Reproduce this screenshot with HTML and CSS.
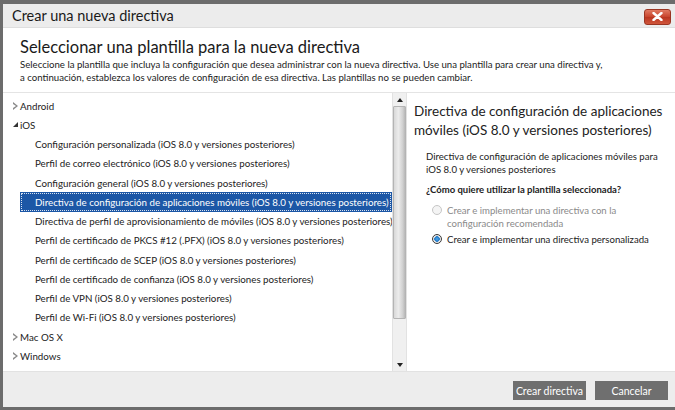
FILE: index.html
```html
<!DOCTYPE html>
<html lang="es">
<head>
<meta charset="utf-8">
<title>Crear una nueva directiva</title>
<link rel="stylesheet" href="styles.css">
</head>
<body>
<div class="dialog">
  <div class="titlebar">
    <span class="title">Crear una nueva directiva</span>
    <button class="close" aria-label="Cerrar">
      <svg width="11" height="9" viewBox="0 0 11 9"><path d="M1.5 1 L9.5 8 M9.5 1 L1.5 8" stroke="#fff" stroke-width="2.4" stroke-linecap="round"/></svg>
    </button>
  </div>
  <div class="header">
    <h1 class="heading">Seleccionar una plantilla para la nueva directiva</h1>
    <p class="desc">Seleccione la plantilla que incluya la configuración que desea administrar con la nueva directiva. Use una plantilla para crear una directiva y, a continuación, establezca los valores de configuración de esa directiva. Las plantillas no se pueden cambiar.</p>
  </div>
  <div class="main">
    <div class="tree">
      <div class="row group"><span class="arrow collapsed"></span>Android</div>
      <div class="row group"><span class="arrow expanded"></span>iOS</div>
      <div class="row child">Configuración personalizada (iOS 8.0 y versiones posteriores)</div>
      <div class="row child">Perfil de correo electrónico (iOS 8.0 y versiones posteriores)</div>
      <div class="row child">Configuración general (iOS 8.0 y versiones posteriores)</div>
      <div class="row child selected"><span class="focus">Directiva de configuración de aplicaciones móviles (iOS 8.0 y versiones posteriores)</span></div>
      <div class="row child">Directiva de perfil de aprovisionamiento de móviles (iOS 8.0 y versiones posteriores)</div>
      <div class="row child">Perfil de certificado de PKCS #12 (.PFX) (iOS 8.0 y versiones posteriores)</div>
      <div class="row child">Perfil de certificado de SCEP (iOS 8.0 y versiones posteriores)</div>
      <div class="row child">Perfil de certificado de confianza (iOS 8.0 y versiones posteriores)</div>
      <div class="row child">Perfil de VPN (iOS 8.0 y versiones posteriores)</div>
      <div class="row child">Perfil de Wi-Fi (iOS 8.0 y versiones posteriores)</div>
      <div class="row group"><span class="arrow collapsed"></span>Mac OS X</div>
      <div class="row group"><span class="arrow collapsed"></span>Windows</div>
    </div>
    <div class="scrollbar">
      <div class="sb-btn"><span class="sb-up"></span></div>
      <div class="sb-thumb"></div>
      <div class="sb-track"></div>
      <div class="sb-btn"><span class="sb-down"></span></div>
    </div>
    <div class="detail">
      <h2 class="detail-title">Directiva de configuración de aplicaciones móviles (iOS 8.0 y versiones posteriores)</h2>
      <div class="detail-body">
        <p class="detail-desc">Directiva de configuración de aplicaciones móviles para iOS 8.0 y versiones posteriores</p>
        <p class="question">¿Cómo quiere utilizar la plantilla seleccionada?</p>
        <div class="option disabled"><span class="radio"></span><span class="opt-text">Crear e implementar una directiva con la configuración recomendada</span></div>
        <div class="option"><span class="radio checked"></span><span class="opt-text">Crear e implementar una directiva personalizada</span></div>
      </div>
    </div>
  </div>
  <div class="footer">
    <button class="btn">Crear directiva</button>
    <button class="btn">Cancelar</button>
  </div>
</div>
</body>
</html>
```

FILE: styles.css
```css
* { box-sizing: border-box; }
html, body { margin: 0; padding: 0; }
body {
  background: #6c6c6c;
  width: 675px;
  height: 410px;
  overflow: hidden;
  font-family: Lato, "Open Sans", sans-serif;
  color: #222;
}
.dialog {
  margin: 4px 0 0 3px;
  height: 403px;
  background: #fff;
  display: flex;
  flex-direction: column;
}
.titlebar {
  height: 24px;
  background: #ececec;
  border-bottom: 1px solid #dedede;
  display: flex;
  align-items: center;
  justify-content: space-between;
  padding: 0 4px 0 9px;
  flex: none;
}
.title { font-size: 14.5px; color: #1a1a1a; }
.close {
  width: 27px;
  height: 16px;
  margin-top: 2px;
  border: 1px solid #9a3522;
  border-radius: 3px;
  background: linear-gradient(#e07a62, #c8432b 50%, #b93620 51%, #d0553b);
  display: flex;
  align-items: center;
  justify-content: center;
  padding: 0;
}
.header {
  height: 65px;
  border-bottom: 1px solid #e4e4e4;
  padding: 9px 0 0 17px;
  flex: none;
}
.heading {
  margin: 0;
  font-weight: 400;
  font-size: 16.5px;
  line-height: 21px;
  color: #1a1a1a;
}
.desc {
  margin: 0;
  font-size: 9.65px;
  line-height: 13px;
  color: #222;
  width: 584px;
}
.main {
  flex: 1;
  display: flex;
  min-height: 0;
}
.tree {
  width: 389px;
  padding-top: 3px;
  flex: none;
}
.row {
  height: 19.25px;
  display: flex;
  align-items: center;
  font-size: 9.75px;
  white-space: nowrap;
  color: #222;
}
.group { padding-left: 7px; }
.child { padding-left: 32px; }
.arrow {
  width: 10px;
  height: 10px;
  display: inline-flex;
  align-items: center;
  justify-content: center;
  position: relative;
}
.arrow.collapsed::before {
  content: "";
  border-left: 5px solid #8a8a8a;
  border-top: 4px solid transparent;
  border-bottom: 4px solid transparent;
}
.arrow.collapsed::after {
  content: "";
  position: absolute;
  left: 3px;
  top: 3px;
  border-left: 3px solid #fff;
  border-top: 2px solid transparent;
  border-bottom: 2px solid transparent;
}
.arrow.expanded::before {
  content: "";
  border-right: 5px solid #333;
  border-top: 5px solid transparent;
}
.selected {
  margin-left: 17px;
  height: 20px;
  margin-top: -0.4px;
  margin-bottom: -0.35px;
  background: #1c57a6;
  color: #fff;
  padding: 1px;
}
.focus {
  flex: 1;
  height: 100%;
  border: 1px dotted #d8e2f0;
  display: flex;
  align-items: center;
  padding-left: 13px;
}
.scrollbar {
  width: 15px;
  flex: none;
  background: #f0f0f0;
  border-left: 1px solid #e2e2e2;
  border-right: 1px solid #e2e2e2;
  display: flex;
  flex-direction: column;
}
.sb-btn {
  height: 13px;
  display: flex;
  align-items: center;
  justify-content: center;
  flex: none;
}
.sb-up { border-bottom: 4px solid #222; border-left: 3.5px solid transparent; border-right: 3.5px solid transparent; }
.sb-down { border-top: 4px solid #222; border-left: 3.5px solid transparent; border-right: 3.5px solid transparent; }
.sb-thumb {
  height: 213px;
  flex: none;
  border: 1px solid #b4b4b4;
  border-radius: 1px;
  background: linear-gradient(to right, #d8d8d8, #ececec 40%, #d0d0d0 80%, #b8b8b8);
}
.sb-track { flex: 1; }
.detail {
  flex: 1;
  padding: 9px 0 0 7px;
  overflow: hidden;
}
.detail-title {
  margin: 0;
  font-weight: 400;
  font-size: 13.5px;
  line-height: 19px;
  color: #222;
}
.detail-body { padding: 11px 0 0 12px; }
.detail-desc {
  margin: 0;
  font-size: 9.6px;
  line-height: 12.5px;
  color: #222;
}
.question {
  margin: 8px 0 0;
  font-size: 9.5px;
  font-weight: 700;
  line-height: 12.5px;
}
.option {
  display: flex;
  align-items: flex-start;
  margin-top: 7px;
  font-size: 9.6px;
  line-height: 13px;
  color: #222;
}
.option + .option { margin-top: 3px; }
.option.disabled { color: #8a8a8a; }
.radio {
  width: 10px;
  height: 10px;
  border-radius: 50%;
  border: 1px solid #c6c6c6;
  background: #f4f4f4;
  margin: 1.5px 5px 0 6px;
  flex: none;
}
.radio.checked {
  border: 1px solid #3a3a3a;
  background: radial-gradient(circle, #4fa6e8 0, #1f78c8 2.5px, #e8e8e8 3px);
}
.footer {
  height: 36px;
  flex: none;
  background: #ededed;
  border-top: 1px solid #e2e2e2;
  display: flex;
  justify-content: flex-end;
  align-items: flex-start;
  gap: 9px;
  padding: 9px 7px 0 0;
}
.btn {
  height: 19px;
  width: 73px;
  border: none;
  background: #6f6f6f;
  color: #fff;
  font-family: Lato, "Open Sans", sans-serif;
  font-size: 10.5px;
  padding: 0;
}
```
